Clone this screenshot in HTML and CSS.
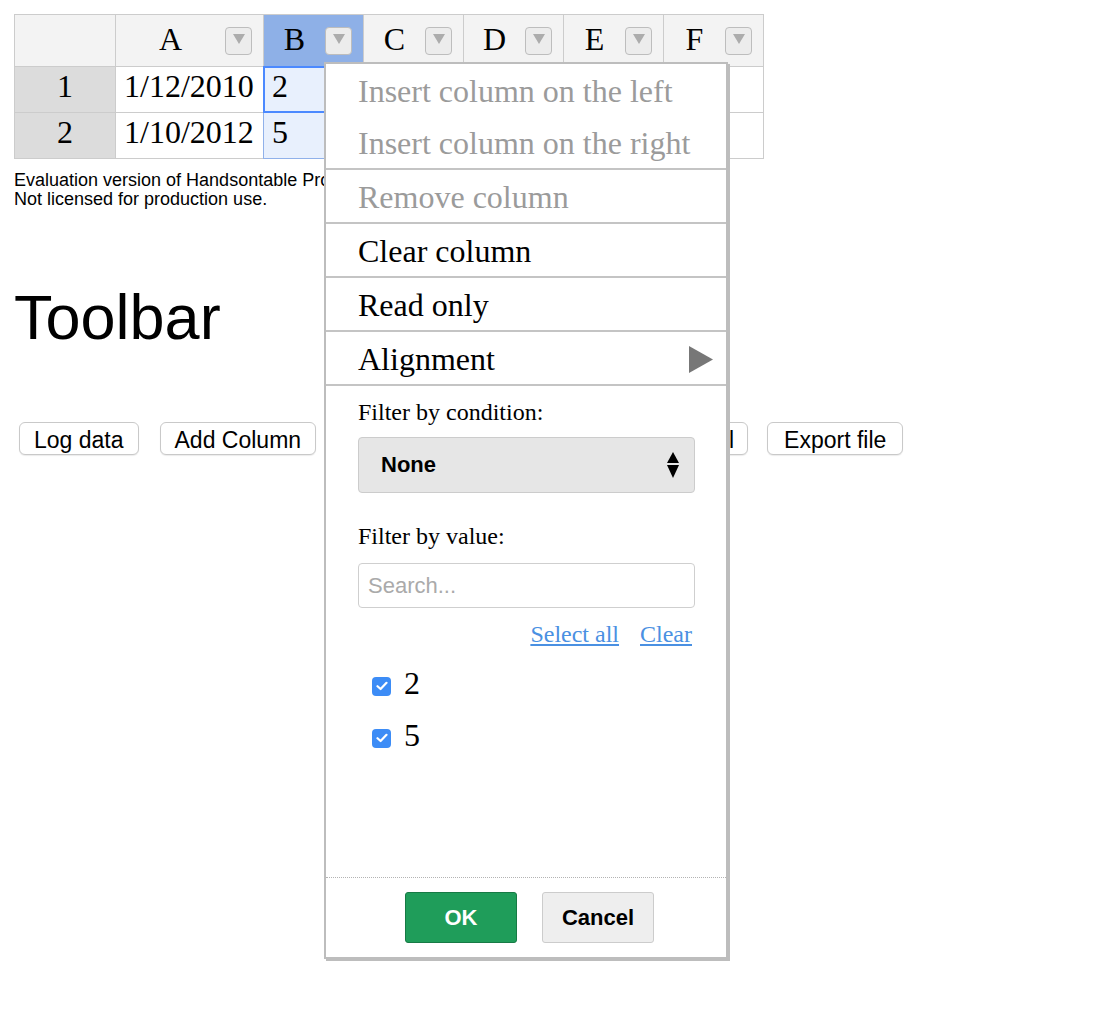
FILE: index.html
```html
<!DOCTYPE html>
<html>
<head>
<meta charset="utf-8">
<link rel="stylesheet" href="styles.css">
</head>
<body>
<div class="grid">
  <div class="cell head corner"></div>
  <div class="cell head"><span class="label">A</span><span class="dd"><svg width="12" height="10" viewBox="0 0 12 10"><polygon points="0,0 12,0 6,10"/></svg></span></div>
  <div class="cell head selected"><span class="label">B</span><span class="dd"><svg width="12" height="10" viewBox="0 0 12 10"><polygon points="0,0 12,0 6,10"/></svg></span></div>
  <div class="cell head"><span class="label">C</span><span class="dd"><svg width="12" height="10" viewBox="0 0 12 10"><polygon points="0,0 12,0 6,10"/></svg></span></div>
  <div class="cell head"><span class="label">D</span><span class="dd"><svg width="12" height="10" viewBox="0 0 12 10"><polygon points="0,0 12,0 6,10"/></svg></span></div>
  <div class="cell head"><span class="label">E</span><span class="dd"><svg width="12" height="10" viewBox="0 0 12 10"><polygon points="0,0 12,0 6,10"/></svg></span></div>
  <div class="cell head"><span class="label">F</span><span class="dd"><svg width="12" height="10" viewBox="0 0 12 10"><polygon points="0,0 12,0 6,10"/></svg></span></div>

  <div class="cell rowhead">1</div>
  <div class="cell">1/12/2010</div>
  <div class="cell sel cur">2</div>
  <div class="cell"></div>
  <div class="cell"></div>
  <div class="cell"></div>
  <div class="cell"></div>

  <div class="cell rowhead">2</div>
  <div class="cell">1/10/2012</div>
  <div class="cell sel">5</div>
  <div class="cell"></div>
  <div class="cell"></div>
  <div class="cell"></div>
  <div class="cell"></div>
</div>

<p class="license">Evaluation version of Handsontable Pro.<br>Not licensed for production use.</p>

<h1 class="title">Toolbar</h1>

<div class="toolbar">
  <button class="btn">Log data</button>
  <button class="btn">Add Column</button>
  <button class="btn">Remove Column</button>
  <button class="btn wide">Export to Excel</button>
  <button class="btn export">Export file</button>
</div>

<div class="menu">
  <div class="mi disabled">Insert column on the left</div>
  <div class="mi disabled">Insert column on the right</div>
  <div class="mi disabled sep">Remove column</div>
  <div class="mi sep">Clear column</div>
  <div class="mi sep">Read only</div>
  <div class="mi sep submenu"><span>Alignment</span><svg class="sub-arrow" width="24" height="27" viewBox="0 0 24 27"><polygon points="0,0 24,13.5 0,27"/></svg></div>

  <div class="filters">
    <div class="flabel first">Filter by condition:</div>
    <div class="select"><span>None</span><svg width="12" height="26" viewBox="0 0 12 26"><polygon points="6,0 12,11 0,11"/><polygon points="0,13 12,13 6,26"/></svg></div>
    <div class="flabel second">Filter by value:</div>
    <input class="search" type="text" placeholder="Search...">
    <div class="links"><a href="#">Select all</a><a href="#">Clear</a></div>
    <div class="values">
      <div class="val"><span class="cb"><svg width="12" height="10" viewBox="0 0 12 10"><path d="M1.5 5.2 L4.6 8 L10.5 1.8" fill="none" stroke="#fff" stroke-width="2.2" stroke-linecap="round" stroke-linejoin="round"/></svg></span><span>2</span></div>
      <div class="val"><span class="cb"><svg width="12" height="10" viewBox="0 0 12 10"><path d="M1.5 5.2 L4.6 8 L10.5 1.8" fill="none" stroke="#fff" stroke-width="2.2" stroke-linecap="round" stroke-linejoin="round"/></svg></span><span>5</span></div>
    </div>
  </div>

  <div class="footer">
    <button class="fbtn ok">OK</button>
    <button class="fbtn cancel">Cancel</button>
  </div>
</div>
</body>
</html>
```

FILE: styles.css
```css
* {
  box-sizing: border-box;
}

body {
  margin: 0;
  padding: 14px;
  background: #fff;
  color: #000;
  font-family: "Liberation Sans", Arial, sans-serif;
}

/* ---------- spreadsheet grid ---------- */
.grid {
  display: grid;
  grid-template-columns: 100px 147px repeat(5, 99px);
  grid-template-rows: 51px 45px 45px;
  gap: 1px;
  padding: 1px;
  width: max-content;
  background: #cccccc;
  font-family: "Liberation Serif", "Times New Roman", serif;
  font-size: 32px;
}

.cell {
  position: relative;
  background: #fff;
  padding: 1px 8px 0;
  line-height: 36px;
  white-space: nowrap;
}

.head {
  display: flex;
  align-items: center;
  padding: 0;
  background: #f3f3f3;
}

.head .label {
  flex: 1;
  text-align: center;
  line-height: 36px;
  padding-bottom: 3px;
}

.head.selected {
  background: #8eb0e7;
}

.dd {
  display: flex;
  align-items: center;
  justify-content: center;
  width: 27px;
  height: 28px;
  margin-right: 11px;
  padding-bottom: 3px;
  border: 1px solid #bdbdbd;
  border-radius: 4px;
  background: #ececec;
}

.dd svg {
  fill: #acacac;
}

.rowhead {
  padding: 1px 0 0;
  text-align: center;
  background: #dcdcdc;
}

.sel {
  background: #e8f0fd;
}

.sel::after {
  content: "";
  position: absolute;
  inset: -1px;
  border: 1px solid #90b1ea;
  pointer-events: none;
}

.cur {
  z-index: 1;
}

.cur::after {
  border: 2px solid #4b89ff;
}

/* ---------- text blocks ---------- */
.license {
  margin: 12px 0 0;
  font-size: 18px;
  line-height: 19px;
}

.title {
  margin: 72px 0 0;
  font-size: 63px;
  font-weight: normal;
  line-height: 72px;
}

/* ---------- toolbar ---------- */
.toolbar {
  display: flex;
  gap: 21px;
  margin: 69px 0 0 5px;
}

.btn {
  height: 33px;
  padding: 4px 14px 0;
  border: 1px solid #c9c9c9;
  border-radius: 6px;
  background: #fff;
  color: #000;
  font-family: "Liberation Sans", Arial, sans-serif;
  font-size: 23px;
  white-space: nowrap;
  box-shadow: 0 1px 1px rgba(0, 0, 0, 0.08);
}

.btn.wide {
  padding: 4px 13px 0 19px;
}

.btn.export {
  margin-left: -2px;
  padding: 4px 16px 0;
}

/* ---------- context menu ---------- */
.menu {
  position: absolute;
  left: 324px;
  top: 62px;
  z-index: 10;
  display: flex;
  flex-direction: column;
  width: 404px;
  height: 897px;
  border: 2px solid #bdbdbd;
  box-shadow: 2px 2px 0 #bdbdbd;
  background: #fff;
  font-family: "Liberation Serif", "Times New Roman", serif;
}

.mi {
  height: 52px;
  padding: 2px 0 0 32px;
  font-size: 32px;
  line-height: 50px;
  color: #000;
  white-space: nowrap;
}

.mi.sep {
  height: 54px;
  border-top: 2px solid #c4c4c4;
}

.mi.disabled {
  color: #9b9b9b;
}

.submenu {
  display: flex;
  align-items: center;
  justify-content: space-between;
  padding-right: 13px;
}

.sub-arrow {
  fill: #777;
}

.filters {
  flex: 1;
  padding: 0 31px 0 32px;
  border-top: 2px solid #c4c4c4;
}

.flabel {
  font-size: 24px;
  line-height: 28px;
}

.flabel.first {
  margin-top: 12px;
}

.flabel.second {
  margin-top: 29px;
}

.select {
  display: flex;
  align-items: center;
  justify-content: space-between;
  height: 56px;
  margin-top: 11px;
  padding: 0 15px 0 22px;
  border: 1px solid #cccccc;
  border-radius: 4px;
  background: #e6e6e6;
  font-family: "Liberation Sans", Arial, sans-serif;
  font-size: 22px;
  font-weight: bold;
}

.search {
  display: block;
  width: 100%;
  height: 45px;
  margin-top: 13px;
  padding: 0 9px;
  border: 1.5px solid #cfcfcf;
  border-radius: 4px;
  outline: none;
  font-family: "Liberation Sans", Arial, sans-serif;
  font-size: 22px;
  color: #000;
}

.search::placeholder {
  color: #aaaaaa;
}

.links {
  margin-top: 12px;
  padding-right: 3px;
  text-align: right;
  font-size: 24px;
  line-height: 28px;
}

.links a {
  margin-left: 21px;
  color: #4a90e2;
  text-decoration: underline;
}

.values {
  margin-top: 9px;
}

.val {
  display: flex;
  align-items: center;
  height: 52px;
  padding-left: 14px;
  font-size: 32px;
  line-height: 52px;
}

.cb {
  display: flex;
  align-items: center;
  justify-content: center;
  width: 19px;
  height: 19px;
  margin: 6px 13px 0 0;
  border-radius: 4px;
  background: #3c8cf6;
}

.footer {
  display: flex;
  justify-content: center;
  gap: 25px;
  height: 80px;
  padding: 14px 0 0 7px;
  border-top: 1px dotted #b3b3b3;
}

.fbtn {
  width: 112px;
  height: 51px;
  border-radius: 3px;
  font-family: "Liberation Sans", Arial, sans-serif;
  font-size: 22px;
  font-weight: bold;
}

.ok {
  border: 1px solid #177a45;
  background: #1f9d5a;
  color: #fff;
}

.cancel {
  border: 1px solid #cccccc;
  background: #eeeeee;
  color: #000;
}
```
